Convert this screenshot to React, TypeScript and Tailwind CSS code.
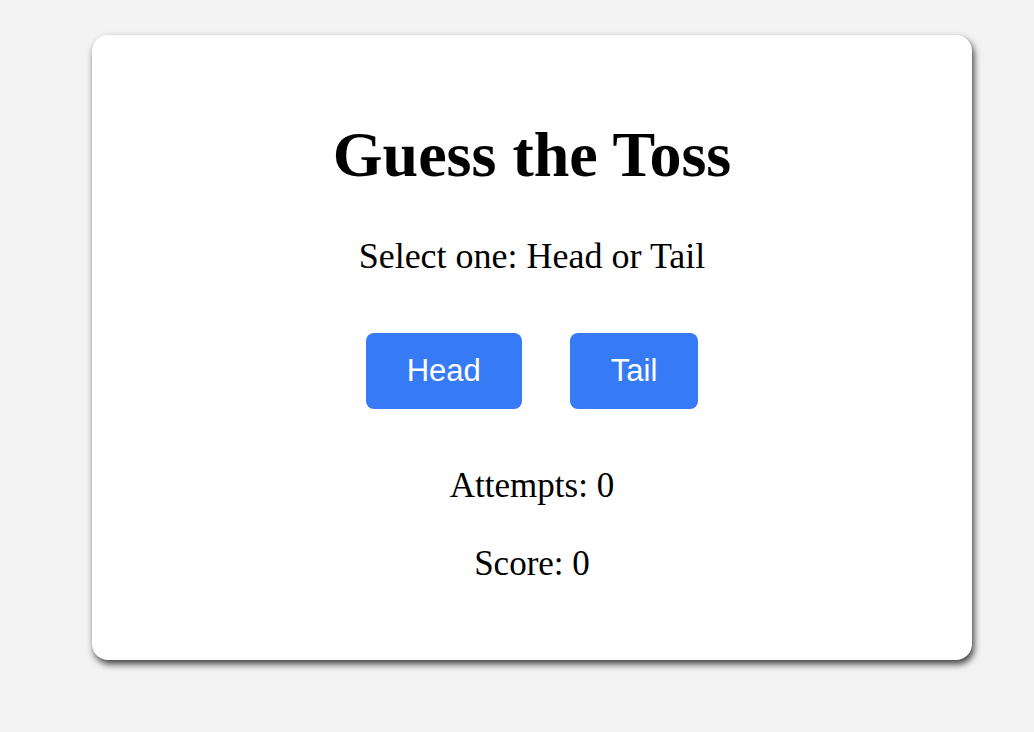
import { useState } from "react";

export default function App() {
  const [attempts, setAttempts] = useState(0);
  const [score, setScore] = useState(0);

  const guess = (side: "Head" | "Tail") => {
    const toss = Math.random() < 0.5 ? "Head" : "Tail";
    setAttempts((a) => a + 1);
    if (toss === side) setScore((s) => s + 1);
  };

  return (
    <main className="min-h-screen w-full bg-[#f3f3f3] pt-[35px]">
      <div className="ml-[92px] flex h-[625px] w-[880px] flex-col items-center rounded-2xl bg-white pt-[88px] shadow-[2px_4px_7px_rgba(0,0,0,0.75)] font-['Liberation_Serif',serif] text-black">
        <h1 className="text-[64px] font-bold leading-none">Guess the Toss</h1>

        <p className="mt-[51px] text-[36px] leading-none">
          Select one: Head or Tail
        </p>

        <div className="mt-[59px] flex gap-12">
          <button
            type="button"
            onClick={() => guess("Head")}
            className="flex h-[76px] items-center rounded-lg bg-[#377af5] px-[41px] font-['Liberation_Sans',Arial,sans-serif] text-[31px] text-white"
          >
            Head
          </button>
          <button
            type="button"
            onClick={() => guess("Tail")}
            className="flex h-[76px] items-center rounded-lg bg-[#377af5] px-[41px] font-['Liberation_Sans',Arial,sans-serif] text-[31px] text-white"
          >
            Tail
          </button>
        </div>

        <p className="mt-[59px] text-[35px] leading-none">Attempts: {attempts}</p>
        <p className="mt-[43px] text-[35px] leading-none">Score: {score}</p>
      </div>
    </main>
  );
}
